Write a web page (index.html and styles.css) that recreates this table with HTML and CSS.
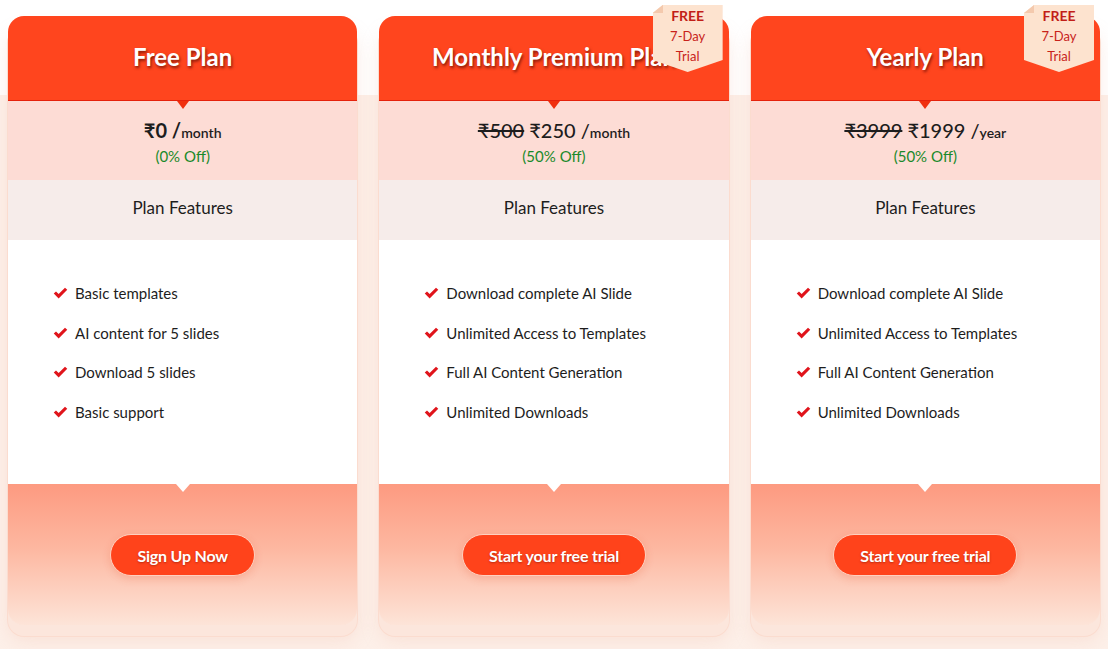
FILE: index.html
```html
<!DOCTYPE html>
<html lang="en">
<head>
<meta charset="utf-8">
<title>Pricing Plans</title>
<link rel="stylesheet" href="styles.css">
</head>
<body>
<section class="pricing">
  <div class="plans">
    <article class="card">
      <header class="card-head"><h2 class="title">Free Plan</h2></header>
      <div class="price-box">
        <div class="price price-bold">₹0 /<span class="per">month</span></div>
        <div class="off">(0% Off)</div>
      </div>
      <div class="feat-head">Plan Features</div>
      <ul class="features">
        <li><svg class="check" viewBox="0 0 16 14"><path d="M0.8 7.6 L3.2 5.4 L6 8.1 L12.8 1.3 L15.2 3.6 L6 12.8 Z" /></svg>Basic templates</li>
        <li><svg class="check" viewBox="0 0 16 14"><path d="M0.8 7.6 L3.2 5.4 L6 8.1 L12.8 1.3 L15.2 3.6 L6 12.8 Z" /></svg>AI content for 5 slides</li>
        <li><svg class="check" viewBox="0 0 16 14"><path d="M0.8 7.6 L3.2 5.4 L6 8.1 L12.8 1.3 L15.2 3.6 L6 12.8 Z" /></svg>Download 5 slides</li>
        <li><svg class="check" viewBox="0 0 16 14"><path d="M0.8 7.6 L3.2 5.4 L6 8.1 L12.8 1.3 L15.2 3.6 L6 12.8 Z" /></svg>Basic support</li>
      </ul>
      <div class="card-foot"><a class="btn" href="#">Sign Up Now</a></div>
    </article>

    <article class="card">
      <div class="ribbon"><span class="r-free">FREE</span><span>7-Day</span><span>Trial</span></div>
      <header class="card-head"><h2 class="title">Monthly Premium Plan</h2></header>
      <div class="price-box">
        <div class="price"><s class="old">₹500</s> ₹250 /<span class="per">month</span></div>
        <div class="off">(50% Off)</div>
      </div>
      <div class="feat-head">Plan Features</div>
      <ul class="features">
        <li><svg class="check" viewBox="0 0 16 14"><path d="M0.8 7.6 L3.2 5.4 L6 8.1 L12.8 1.3 L15.2 3.6 L6 12.8 Z" /></svg>Download complete AI Slide</li>
        <li><svg class="check" viewBox="0 0 16 14"><path d="M0.8 7.6 L3.2 5.4 L6 8.1 L12.8 1.3 L15.2 3.6 L6 12.8 Z" /></svg>Unlimited Access to Templates</li>
        <li><svg class="check" viewBox="0 0 16 14"><path d="M0.8 7.6 L3.2 5.4 L6 8.1 L12.8 1.3 L15.2 3.6 L6 12.8 Z" /></svg>Full AI Content Generation</li>
        <li><svg class="check" viewBox="0 0 16 14"><path d="M0.8 7.6 L3.2 5.4 L6 8.1 L12.8 1.3 L15.2 3.6 L6 12.8 Z" /></svg>Unlimited Downloads</li>
      </ul>
      <div class="card-foot"><a class="btn" href="#">Start your free trial</a></div>
    </article>

    <article class="card">
      <div class="ribbon"><span class="r-free">FREE</span><span>7-Day</span><span>Trial</span></div>
      <header class="card-head"><h2 class="title">Yearly Plan</h2></header>
      <div class="price-box">
        <div class="price"><s class="old">₹3999</s> ₹1999 /<span class="per">year</span></div>
        <div class="off">(50% Off)</div>
      </div>
      <div class="feat-head">Plan Features</div>
      <ul class="features">
        <li><svg class="check" viewBox="0 0 16 14"><path d="M0.8 7.6 L3.2 5.4 L6 8.1 L12.8 1.3 L15.2 3.6 L6 12.8 Z" /></svg>Download complete AI Slide</li>
        <li><svg class="check" viewBox="0 0 16 14"><path d="M0.8 7.6 L3.2 5.4 L6 8.1 L12.8 1.3 L15.2 3.6 L6 12.8 Z" /></svg>Unlimited Access to Templates</li>
        <li><svg class="check" viewBox="0 0 16 14"><path d="M0.8 7.6 L3.2 5.4 L6 8.1 L12.8 1.3 L15.2 3.6 L6 12.8 Z" /></svg>Full AI Content Generation</li>
        <li><svg class="check" viewBox="0 0 16 14"><path d="M0.8 7.6 L3.2 5.4 L6 8.1 L12.8 1.3 L15.2 3.6 L6 12.8 Z" /></svg>Unlimited Downloads</li>
      </ul>
      <div class="card-foot"><a class="btn" href="#">Start your free trial</a></div>
    </article>
  </div>
</section>
</body>
</html>
```

FILE: styles.css
```css
* { box-sizing: border-box; }

html, body {
  margin: 0;
  padding: 0;
}

body {
  font-family: Lato, "Open Sans", "Liberation Sans", sans-serif;
  color: #1f1f1f;
  background: linear-gradient(#ffffff 0, #ffffff 95px, #fdf0e9 95px, #fdf0e9 100%);
  min-height: 649px;
  overflow: hidden;
}

.pricing {
  padding: 16px 8px 0;
}

.plans {
  display: grid;
  grid-template-columns: repeat(3, 1fr);
  column-gap: 22px;
}

.card {
  position: relative;
  display: flex;
  flex-direction: column;
  border-radius: 16px;
  box-shadow: 0 11px 0 0 #fce6dc, 0 11px 0 1px #fbdccf, 0 16px 18px rgba(240, 180, 160, 0.25);
}

.card-head {
  position: relative;
  height: 85px;
  background: #ff451e;
  border-radius: 16px 16px 0 0;
  border-bottom: 1px solid #e5220c;
  display: flex;
  align-items: center;
  justify-content: center;
  padding-bottom: 4px;
}

.card-head::after {
  content: "";
  position: absolute;
  left: 50%;
  bottom: -9px;
  margin-left: -6px;
  border-left: 6px solid transparent;
  border-right: 6px solid transparent;
  border-top: 8px solid #f0300f;
  z-index: 2;
}

.title {
  margin: 0;
  font-size: 24px;
  font-weight: 700;
  color: #ffffff;
  text-shadow: 1px 2px 3px rgba(90, 10, 0, 0.75);
}

.price-box {
  height: 79px;
  background: #fddcd5;
  display: flex;
  flex-direction: column;
  align-items: center;
  padding-top: 16px;
}

.price {
  font-size: 20px;
  line-height: 26px;
  font-weight: 500;
  color: #1d1d1d;
}

.price-bold {
  font-weight: 700;
}

.old {
  text-decoration: line-through;
  text-decoration-thickness: 2px;
}

.per {
  font-size: 14px;
  font-weight: 600;
}

.off {
  font-size: 15px;
  line-height: 20px;
  color: #1a8a2a;
}

.feat-head {
  height: 60px;
  background: #f6ecea;
  display: flex;
  align-items: center;
  justify-content: center;
  font-size: 17px;
  color: #1d1d1d;
  padding-bottom: 6px;
}

.features {
  list-style: none;
  margin: 0;
  padding: 42px 0 0 45px;
  height: 244px;
  background: #ffffff;
}

.features li {
  display: flex;
  align-items: center;
  height: 22px;
  margin-bottom: 17.7px;
  font-size: 15px;
  color: #1d1d1d;
}

.check {
  width: 15px;
  height: 14px;
  margin-right: 7px;
  flex: none;
}

.check path {
  fill: #e0141b;
}

.card-foot {
  position: relative;
  height: 141px;
  background: linear-gradient(#fd9a80 0%, #fdb7a0 45%, #fde4d8 100%);
  border-radius: 0 0 16px 16px;
  display: flex;
  align-items: flex-start;
  justify-content: center;
  padding-top: 50px;
}

.card-foot::before {
  content: "";
  position: absolute;
  left: 50%;
  top: 0;
  margin-left: -7px;
  border-left: 7px solid transparent;
  border-right: 7px solid transparent;
  border-top: 8px solid #ffffff;
}

.btn {
  display: inline-flex;
  align-items: center;
  justify-content: center;
  height: 42px;
  padding: 0 26px;
  border-radius: 21px;
  background: #ff431b;
  border: 1px solid #ffd0bf;
  box-shadow: 0 3px 8px rgba(220, 60, 20, 0.18);
  color: #ffffff;
  font-size: 16px;
  font-weight: 700;
  letter-spacing: -0.2px;
  text-decoration: none;
  text-shadow: 0 1px 2px rgba(120, 20, 0, 0.5);
}

.ribbon {
  position: absolute;
  top: -11px;
  right: 6px;
  width: 70px;
  height: 67px;
  background: #fde3cf;
  clip-path: polygon(10px 0, 100% 0, 100% 82%, 50% 100%, 0 82%, 0 8px);
  display: flex;
  flex-direction: column;
  align-items: center;
  padding-top: 1px;
  z-index: 3;
  color: #c8221a;
  font-size: 13px;
  line-height: 20px;
}

.ribbon::before {
  content: "";
  position: absolute;
  left: 0;
  top: 0;
  width: 10px;
  height: 8px;
  background: #f4c9ad;
}

.r-free {
  font-size: 14px;
  font-weight: 700;
  color: #c21e18;
}
```
